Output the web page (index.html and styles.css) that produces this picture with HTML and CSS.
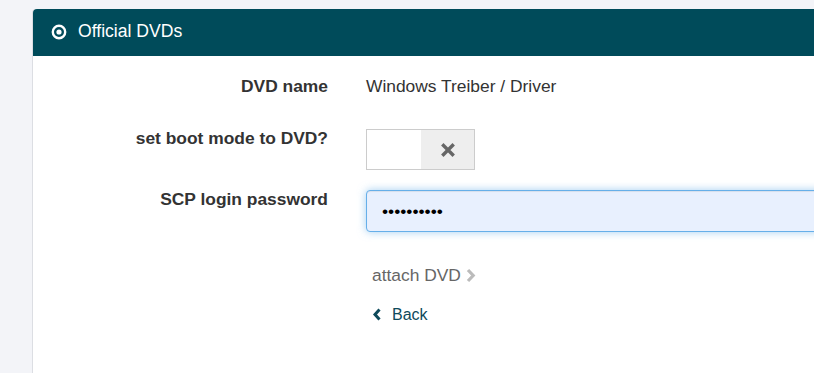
FILE: index.html
```html
<!DOCTYPE html>
<html>
<head>
<meta charset="utf-8">
<link rel="stylesheet" href="styles.css">
</head>
<body>
<div class="page">
  <div class="panel">
    <div class="panel-heading">
      <svg class="dot-icon" width="16" height="16" viewBox="0 0 16 16">
        <circle cx="8" cy="8" r="6.2" fill="none" stroke="#fff" stroke-width="2.4"/>
        <circle cx="8" cy="8" r="2.6" fill="#fff"/>
      </svg>
      <span>Official DVDs</span>
    </div>
    <div class="panel-body">
      <div class="row row-name">
        <div class="label">DVD name</div>
        <div class="value">Windows Treiber / Driver</div>
      </div>
      <div class="row row-boot">
        <div class="label">set boot mode to DVD?</div>
        <div class="value">
          <div class="toggle">
            <span class="toggle-on"></span>
            <span class="toggle-off">
              <svg width="14" height="14" viewBox="0 0 14 14"><path d="M2.5 2.5 L11.5 11.5 M11.5 2.5 L2.5 11.5" stroke="#666" stroke-width="3.4" stroke-linecap="square"/></svg>
            </span>
          </div>
        </div>
      </div>
      <div class="row row-pass">
        <div class="label">SCP login password</div>
        <div class="value">
          <input class="pass" type="password" value="abcdefghij">
        </div>
      </div>
      <div class="row row-attach">
        <div class="label"></div>
        <div class="value">
          <a class="attach">attach DVD<svg width="11" height="15" viewBox="0 0 11 15"><path d="M3 2 L8.2 7.5 L3 13" fill="none" stroke="#bbb" stroke-width="3.2"/></svg></a>
        </div>
      </div>
      <div class="row row-back">
        <div class="label"></div>
        <div class="value">
          <a class="back"><svg width="10" height="15" viewBox="0 0 10 15"><path d="M7.5 2.5 L3 7.5 L7.5 12.5" fill="none" stroke="#0e4a5b" stroke-width="3"/></svg>Back</a>
        </div>
      </div>
    </div>
  </div>
</div>
</body>
</html>
```
FILE: styles.css
```css
html, body {
  margin: 0;
  padding: 0;
  background: #f3f4f8;
  overflow: hidden;
  font-family: "Liberation Sans", Arial, sans-serif;
  font-size: 17.4px;
  color: #333;
}
.page {
  padding: 9px 0 0 32px;
}
.panel {
  width: 800px;
  height: 364px;
  background: #fff;
  border-left: 1px solid #dcdee3;
  border-top-left-radius: 4px;
}
.panel-heading {
  height: 47px;
  background: #004b5a;
  color: #fff;
  display: flex;
  align-items: center;
  padding-left: 18px;
  border-top-left-radius: 4px;
  font-size: 17.6px;
}
.dot-icon {
  margin-right: 11px;
  margin-top: -2px;
}
.panel-heading span {
  line-height: 1;
  margin-top: -1px;
}
.panel-body {
  padding-top: 18px;
}
.row {
  display: flex;
  line-height: 25px;
}
.label {
  width: 295px;
  text-align: right;
  font-weight: bold;
  flex: none;
}
.value {
  margin-left: 38px;
  flex: 1;
}
.row-name { margin-bottom: 27px; }
.row-boot { margin-bottom: 17px; }
.row-boot .value, .row-pass .value { padding-top: 3px; }
.toggle {
  width: 107px;
  height: 39px;
  border: 1px solid #ccc;
  display: flex;
}
.toggle-on {
  width: 54px;
  background: #fff;
}
.toggle-off {
  flex: 1;
  background: #eee;
  display: flex;
  align-items: center;
  justify-content: center;
}
.pass {
  box-sizing: border-box;
  width: 470px;
  height: 42px;
  border: 1px solid #66afe9;
  border-radius: 4px;
  background: #e8f0fe;
  box-shadow: inset 0 1px 1px rgba(0,0,0,.075), 0 0 8px rgba(102,175,233,.6);
  padding: 0 15px;
  font-family: "Liberation Sans", Arial, sans-serif;
  font-size: 17.4px;
  color: #000;
  outline: none;
  display: block;
}
.row-attach {
  margin-top: 31px;
  margin-bottom: 14px;
}
.attach {
  color: #666;
  padding-left: 6px;
}
.attach svg { vertical-align: -2px; margin-left: 4px; }
.back {
  color: #0e4a5b;
  padding-left: 6px;
  font-size: 16px;
}
.back svg { margin-right: 10px; vertical-align: -2px; }
```
